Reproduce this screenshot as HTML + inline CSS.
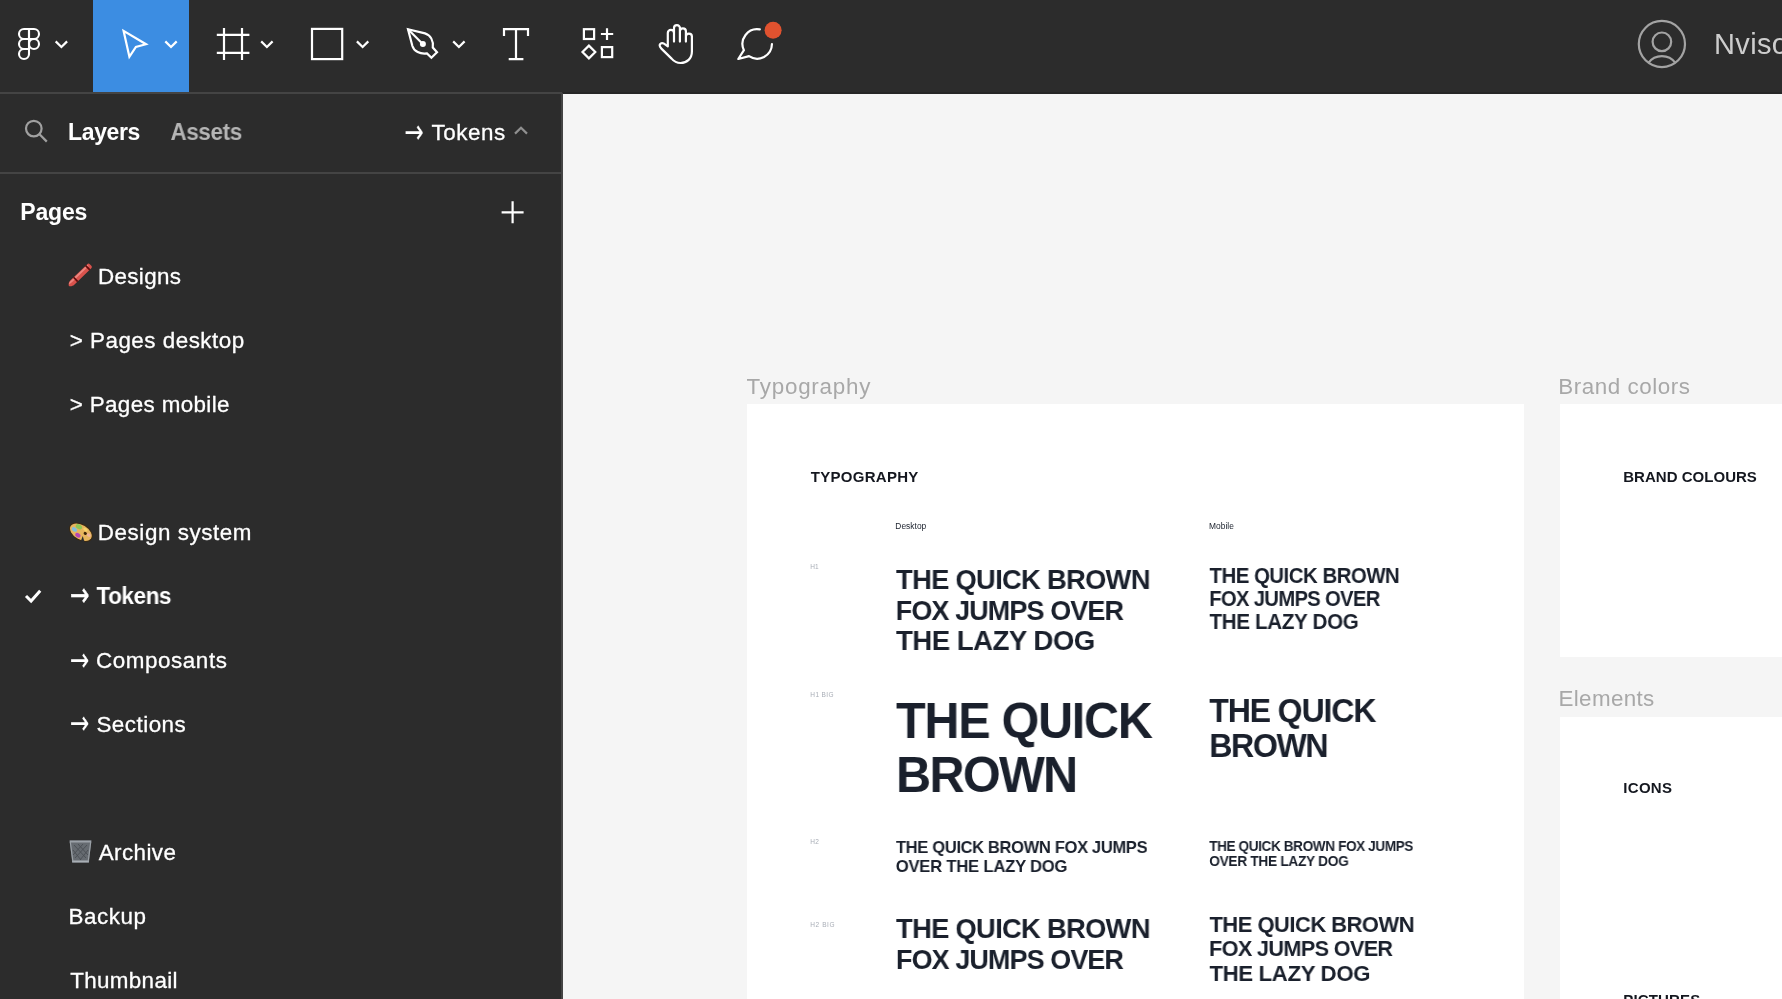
<!DOCTYPE html>
<html lang="en">
<head>
<meta charset="utf-8">
<title>Nviso – Figma</title>
<style>
html,body{margin:0;padding:0;}
body{width:1782px;height:999px;overflow:hidden;position:relative;background:#f5f5f5;font-family:"Liberation Sans",sans-serif;}
.abs{position:absolute;}
.t{position:absolute;white-space:nowrap;margin:0;padding:0;will-change:transform;}
#canvas{left:563px;top:94px;width:1219px;height:905px;background:#f5f5f5;overflow:hidden;}
#toolbar{left:0;top:0;width:1782px;height:93px;background:#2c2c2c;}
#tbline{left:563px;top:92px;width:1219px;height:2px;background:#262626;}
#panel{left:0;top:92px;width:562px;height:907px;background:#2c2c2c;}
#pline-top{left:0;top:92px;width:562px;height:2px;background:#444444;}
#pline-right{left:561px;top:93px;width:2px;height:906px;background:#444444;}
#pline-hdr{left:0;top:172px;width:561px;height:2px;background:#444444;}
#sel{left:93px;top:0;width:96px;height:92px;background:#3c8de2;}
.frame{position:absolute;background:#ffffff;}
.grp{position:absolute;left:0;top:0;width:0;height:0;margin:0;padding:0;list-style:none;}
svg{position:absolute;overflow:visible;}
#layers{left:68px;top:118px;font-size:23px;line-height:28px;font-weight:700;letter-spacing:-0.390px;color:#ffffff;padding-left:0.10px;}
#assets{left:170px;top:118px;font-size:23px;line-height:28px;font-weight:700;letter-spacing:-0.365px;color:#b5b5b5;transform:scale(0.9754,1);transform-origin:0 50%;padding-left:0.42px;}
#tok_hdr{left:431px;top:119px;font-size:22.4px;line-height:27px;font-weight:400;letter-spacing:0.560px;color:#ffffff;-webkit-text-stroke:0.3px #fff;padding-left:0.45px;}
#pages{left:20px;top:198px;font-size:23px;line-height:28px;font-weight:700;letter-spacing:-0.162px;color:#ffffff;padding-left:0.30px;}
#p_designs{left:97px;top:263px;font-size:22.4px;line-height:27px;font-weight:400;letter-spacing:0.350px;color:#ffffff;-webkit-text-stroke:0.3px #fff;padding-left:0.95px;}
#p_pdesk{left:69px;top:327px;font-size:22.4px;line-height:27px;font-weight:400;letter-spacing:0.504px;color:#ffffff;-webkit-text-stroke:0.3px #fff;padding-left:0.70px;}
#p_pmob{left:69px;top:391px;font-size:22.4px;line-height:27px;font-weight:400;letter-spacing:0.369px;color:#ffffff;-webkit-text-stroke:0.3px #fff;padding-left:0.70px;}
#p_ds{left:97px;top:519px;font-size:22.4px;line-height:27px;font-weight:400;letter-spacing:0.571px;color:#ffffff;-webkit-text-stroke:0.3px #fff;padding-left:0.85px;}
#p_tok{left:96px;top:582px;font-size:23px;line-height:28px;font-weight:700;letter-spacing:-0.374px;color:#ffffff;transform:scale(0.9758,1);transform-origin:0 50%;padding-left:0.47px;}
#p_comp{left:95px;top:647px;font-size:22.4px;line-height:27px;font-weight:400;letter-spacing:0.589px;color:#ffffff;-webkit-text-stroke:0.3px #fff;padding-left:0.90px;}
#p_sect{left:96px;top:711px;font-size:22.4px;line-height:27px;font-weight:400;letter-spacing:0.493px;color:#ffffff;-webkit-text-stroke:0.3px #fff;padding-left:0.40px;}
#p_arch{left:98px;top:839px;font-size:22.4px;line-height:27px;font-weight:400;letter-spacing:0.425px;color:#ffffff;-webkit-text-stroke:0.3px #fff;padding-left:0.70px;}
#p_back{left:68px;top:903px;font-size:22.4px;line-height:27px;font-weight:400;letter-spacing:0.550px;color:#ffffff;-webkit-text-stroke:0.3px #fff;padding-left:0.45px;}
#p_thumb{left:70px;top:967px;font-size:22.4px;line-height:27px;font-weight:400;letter-spacing:0.350px;color:#ffffff;-webkit-text-stroke:0.3px #fff;padding-left:0.15px;}
#fname{left:1714px;top:27px;font-size:29px;line-height:35px;font-weight:400;letter-spacing:0.300px;color:#cdcdcd;padding-left:0.10px;}
#l_typo{left:746px;top:373px;font-size:22.4px;line-height:27px;font-weight:400;letter-spacing:0.756px;color:#a8a8a8;padding-left:0.60px;}
#l_brand{left:1558px;top:373px;font-size:22.4px;line-height:27px;font-weight:400;letter-spacing:0.536px;color:#a8a8a8;padding-left:0.35px;}
#l_elem{left:1558px;top:685px;font-size:22.4px;line-height:27px;font-weight:400;letter-spacing:0.364px;color:#a8a8a8;padding-left:0.45px;}
#h_typo{left:810px;top:468px;font-size:15px;line-height:18px;font-weight:700;letter-spacing:0.289px;color:#14171f;padding-left:0.75px;}
#h_brand{left:1623px;top:468px;font-size:15px;line-height:18px;font-weight:700;letter-spacing:0.029px;color:#14171f;padding-left:0.20px;}
#h_icons{left:1623px;top:779px;font-size:15px;line-height:18px;font-weight:700;letter-spacing:0.300px;color:#14171f;padding-left:0.30px;}
#h_pict{left:1623px;top:991px;font-size:15px;line-height:18px;font-weight:700;letter-spacing:0.150px;color:#14171f;padding-left:0.30px;}
#s_desk{left:895px;top:521px;font-size:8.4px;line-height:11px;font-weight:400;letter-spacing:0.025px;color:#1a202c;padding-left:0.35px;}
#s_mob{left:1208px;top:521px;font-size:8.4px;line-height:11px;font-weight:400;letter-spacing:0.060px;color:#1a202c;padding-left:0.95px;}
#t_h1{left:810px;top:563px;font-size:6.5px;line-height:8px;font-weight:400;letter-spacing:0.100px;color:#a8adb6;padding-left:0.30px;}
#t_h1b{left:810px;top:691px;font-size:6.5px;line-height:8px;font-weight:400;letter-spacing:0.390px;color:#a8adb6;padding-left:0.30px;}
#t_h2{left:810px;top:838px;font-size:6.5px;line-height:8px;font-weight:400;letter-spacing:0.250px;color:#a8adb6;padding-left:0.30px;}
#t_h2b{left:810px;top:921px;font-size:6.5px;line-height:8px;font-weight:400;letter-spacing:0.590px;color:#a8adb6;padding-left:0.30px;}
#h1d_1{left:896px;top:562px;font-size:28.35px;line-height:35px;font-weight:700;letter-spacing:-0.707px;color:#1a202c;transform:scale(0.9635,1);transform-origin:0 50%;padding-left:0.06px;}
#h1d_2{left:895px;top:593px;font-size:28.35px;line-height:35px;font-weight:700;letter-spacing:-0.937px;color:#1a202c;transform:scale(0.9512,1);transform-origin:0 50%;padding-left:0.84px;}
#h1d_3{left:896px;top:623px;font-size:28.35px;line-height:35px;font-weight:700;letter-spacing:-0.517px;color:#1a202c;transform:scale(0.9728,1);transform-origin:0 50%;padding-left:0.06px;}
#h1m_1{left:1209px;top:563px;font-size:21.2px;line-height:26px;font-weight:700;letter-spacing:-0.526px;color:#1a202c;transform:scale(0.9638,1);transform-origin:0 50%;padding-left:0.48px;}
#h1m_2{left:1209px;top:586px;font-size:21.2px;line-height:26px;font-weight:700;letter-spacing:-0.671px;color:#1a202c;transform:scale(0.9531,1);transform-origin:0 50%;padding-left:0.18px;}
#h1m_3{left:1209px;top:609px;font-size:21.2px;line-height:26px;font-weight:700;letter-spacing:-0.365px;color:#1a202c;transform:scale(0.9741,1);transform-origin:0 50%;padding-left:0.47px;}
#h1bd_1{left:896px;top:690px;font-size:50.5px;line-height:61px;font-weight:700;letter-spacing:-1.329px;color:#1a202c;transform:scale(0.9616,1);transform-origin:0 50%;padding-left:0.02px;}
#h1bd_2{left:896px;top:744px;font-size:50.5px;line-height:61px;font-weight:700;letter-spacing:-1.769px;color:#1a202c;transform:scale(0.9626,1);transform-origin:0 50%;padding-left:0.03px;}
#h1bm_1{left:1209px;top:690px;font-size:33.7px;line-height:41px;font-weight:700;letter-spacing:-1.150px;color:#1a202c;transform:scale(0.95,1);transform-origin:0 50%;padding-left:0.24px;}
#h1bm_2{left:1209px;top:725px;font-size:33.7px;line-height:41px;font-weight:700;letter-spacing:-1.459px;color:#1a202c;transform:scale(0.9539,1);transform-origin:0 50%;padding-left:0.16px;}
#h2d_1{left:895px;top:837px;font-size:17.1px;line-height:21px;font-weight:700;letter-spacing:-0.363px;color:#1a202c;transform:scale(0.9674,1);transform-origin:0 50%;padding-left:0.99px;}
#h2d_2{left:895px;top:856px;font-size:17.1px;line-height:21px;font-weight:700;letter-spacing:-0.261px;color:#1a202c;transform:scale(0.9766,1);transform-origin:0 50%;padding-left:0.68px;}
#h2m_1{left:1209px;top:838px;font-size:14.15px;line-height:17px;font-weight:700;letter-spacing:-0.383px;color:#1a202c;transform:scale(0.9585,1);transform-origin:0 50%;padding-left:0.17px;}
#h2m_2{left:1209px;top:853px;font-size:14.15px;line-height:17px;font-weight:700;letter-spacing:-0.300px;color:#1a202c;transform:scale(0.9675,1);transform-origin:0 50%;padding-left:0.22px;}
#h2bd_1{left:896px;top:911px;font-size:28.35px;line-height:35px;font-weight:700;letter-spacing:-0.707px;color:#1a202c;transform:scale(0.9635,1);transform-origin:0 50%;padding-left:0.06px;}
#h2bd_2{left:895px;top:942px;font-size:28.35px;line-height:35px;font-weight:700;letter-spacing:-0.944px;color:#1a202c;transform:scale(0.9507,1);transform-origin:0 50%;padding-left:1.05px;}
#h2bm_1{left:1209px;top:910px;font-size:22.75px;line-height:28px;font-weight:700;letter-spacing:-0.536px;color:#1a202c;transform:scale(0.9656,1);transform-origin:0 50%;padding-left:0.47px;}
#h2bm_2{left:1209px;top:934px;font-size:22.75px;line-height:28px;font-weight:700;letter-spacing:-0.715px;color:#1a202c;transform:scale(0.9536,1);transform-origin:0 50%;padding-left:0.07px;}
#h2bm_3{left:1209px;top:959px;font-size:22.75px;line-height:28px;font-weight:700;letter-spacing:-0.365px;color:#1a202c;transform:scale(0.9759,1);transform-origin:0 50%;padding-left:0.47px;}
#a_hdr{left:404px;top:112px;font-size:33px;line-height:40px;font-weight:400;letter-spacing:0.000px;color:#ffffff;transform:scale(0.7,1);transform-origin:0 50%;font-family:'DejaVu Sans','Liberation Sans',sans-serif;padding-left:0.57px;}
#a_tok{left:69px;top:575px;font-size:33px;line-height:40px;font-weight:400;letter-spacing:0.000px;color:#ffffff;-webkit-text-stroke:0.5px #fff;transform:scale(0.7,1);transform-origin:0 50%;font-family:'DejaVu Sans','Liberation Sans',sans-serif;padding-left:1.39px;}
#a_comp{left:69px;top:640px;font-size:33px;line-height:40px;font-weight:400;letter-spacing:0.000px;color:#ffffff;transform:scale(0.7,1);transform-origin:0 50%;font-family:'DejaVu Sans','Liberation Sans',sans-serif;padding-left:1.14px;}
#a_sect{left:69px;top:703px;font-size:33px;line-height:40px;font-weight:400;letter-spacing:0.000px;color:#ffffff;transform:scale(0.7,1);transform-origin:0 50%;font-family:'DejaVu Sans','Liberation Sans',sans-serif;padding-left:1.14px;}
</style>
</head>
<body>
<div id="canvas" class="abs"></div>
<div class="frame" style="left:746.5px;top:403.7px;width:777.5px;height:600px"></div>
<div class="frame" style="left:1559.5px;top:403.7px;width:230px;height:253.4px"></div>
<div class="frame" style="left:1559.5px;top:716.5px;width:230px;height:290px"></div>
<div id="toolbar" class="abs"></div>
<div id="tbline" class="abs"></div>
<div id="panel" class="abs"></div>
<div id="pline-top" class="abs"></div>
<div id="pline-right" class="abs"></div>
<div id="pline-hdr" class="abs"></div>
<div id="sel" class="abs"></div>
<svg id="icons" width="1782" height="999" viewBox="0 0 1782 999" style="left:0;top:0" fill="none" stroke="#ffffff" stroke-width="2.2">
<!-- figma logo -->
<g stroke-width="2.1">
<path d="M29,29 H24 a5,5 0 0 0 0,10 H29 Z"/>
<path d="M29,29 H34 a5,5 0 0 1 0,10 H29 Z"/>
<path d="M29,39 H24 a5,5 0 0 0 0,10 H29 Z"/>
<circle cx="34" cy="44" r="5"/>
<path d="M29,49 H24 a5,5 0 1 0 5,5 Z"/>
</g>
<!-- chevrons -->
<g stroke-width="2.2">
<path d="M55.7,41.4 L61.4,47 L67.1,41.4"/>
<path d="M165.3,41.4 L171,47 L176.7,41.4"/>
<path d="M261.2,41.4 L266.9,47 L272.6,41.4"/>
<path d="M356.9,41.4 L362.6,47 L368.3,41.4"/>
<path d="M453.2,41.4 L458.9,47 L464.6,41.4"/>
</g>
<!-- move tool -->
<path d="M123.6,30.9 L146,44.2 L135.9,46.9 L129.4,56.8 Z" stroke-linejoin="miter"/>
<!-- frame tool -->
<path d="M224,27.9 V60.1 M242,27.9 V60.1 M216.8,34.9 H249.4 M216.8,52.9 H249.4"/>
<!-- rectangle tool -->
<rect x="312" y="28.9" width="30.2" height="30.2"/>
<!-- pen tool -->
<path d="M408,29.2 L425,33.4 C430.5,35.2 433.6,40.5 432.8,47.6 L437,52.3 L431.4,57.8 L427,53.4 C420,54.3 414,51.5 412.4,46 Z" stroke-linejoin="miter"/>
<path d="M408,29.3 L422,43.2"/>
<circle cx="422.9" cy="44.1" r="3" fill="#ffffff" stroke="none"/>
<!-- text tool -->
<path d="M504,35.9 V29.1 H528 V35.9 M516,29.1 V59.2 M508.7,59.2 H523.4"/>
<!-- components -->
<rect x="583.9" y="29.2" width="10.2" height="9.8"/>
<path d="M607,28.2 V40 M600.9,34 H613.2"/>
<path d="M588.9,45.6 L595.3,52 L588.9,58.4 L582.5,52 Z"/>
<rect x="601.9" y="47.1" width="10.3" height="10"/>
<!-- hand -->
<path stroke-linejoin="round" stroke-linecap="round" d="M667.8,46.4 V33 a3.1,3.1 0 0 1 6.2,0 V41.6 M674,33 V28.1 a2.95,2.95 0 0 1 5.9,0 V41.6 M679.9,31.3 a3,3 0 0 1 6,0 V41.6 M685.9,36.6 a3,3 0 0 1 6,0 V51.5 C691.9,58.5 687,63 680.5,63 C676.5,63 673.8,61.2 671.6,58.6 L661.4,48.6 C659.3,46.6 659.2,44.6 660.6,43.6 C661.6,42.8 662.8,42.9 664,43.7 L667.8,46.4"/>
<!-- comment -->
<path stroke-linecap="round" stroke-linejoin="round" d="M759.8,29.4 A14.75,14.75 0 0 0 743.9,50.2 L738.3,59 L749,56.15 A14.75,14.75 0 0 0 771.95,44.1"/>
<circle cx="773.1" cy="30.2" r="8.5" fill="#e0522f" stroke="none"/>
<!-- user -->
<g stroke="#a3a3a3">
<circle cx="1661.9" cy="44" r="23.1"/>
<circle cx="1661.9" cy="41.8" r="9.3"/>
<path d="M1648.4,62.9 C1652,58 1657,56.1 1661.9,56.1 C1666.8,56.1 1671.8,58 1675.4,62.9"/>
</g>
<!-- search -->
<g stroke="#a0a0a0">
<circle cx="33.8" cy="128.6" r="7.8"/>
<path d="M39.5,134.3 L46.8,141.6"/>
</g>
<!-- page dropdown caret -->
<path d="M515,133.6 L521,127.8 L527,133.6" stroke="#909090"/>
<!-- plus -->
<path d="M512.6,201.3 V223.3 M501.6,212.3 H523.6"/>
<!-- check -->
<path d="M26,596 L31.1,601 L40.2,590.8" stroke-width="3"/>
<!-- crayon -->
<g transform="translate(79.8,275.4) rotate(-44)" stroke="none">
<title>🖍️</title>
<path d="M-15.2,0 C-14.5,-1.6 -12.5,-2.9 -10.5,-2.9 H13.2 a1.8,1.8 0 0 1 1.8,1.8 V1.1 a1.8,1.8 0 0 1 -1.8,1.8 H-10.5 C-12.5,2.9 -14.5,1.6 -15.2,0 Z" fill="#d9524c"/>
<path d="M-14,-0.9 C-13,-2 -12,-2.4 -10.5,-2.4 H13 V-0.6 H-10 Z" fill="#f0908a" opacity="0.85"/>
<rect x="-6.6" y="-3" width="1.7" height="6" fill="#5e0b0b"/>
<rect x="10.2" y="-3" width="1.7" height="6" fill="#5e0b0b"/>
</g>
<!-- palette -->
<g transform="translate(80.9,532.2) rotate(31)" stroke="none">
<title>🎨</title>
<ellipse cx="0" cy="0" rx="13" ry="8.3" fill="#3a2a14"/>
<ellipse cx="0" cy="0" rx="11.9" ry="7.2" fill="#e7b55e"/>
<ellipse cx="-4.5" cy="-3.6" rx="3.4" ry="2.3" fill="#8ec655"/>
<ellipse cx="-7" cy="1" rx="2.9" ry="2" fill="#82bfdc"/>
<ellipse cx="-1" cy="4.2" rx="2.9" ry="2.1" fill="#b645b4"/>
<ellipse cx="4.4" cy="-1.2" rx="1.7" ry="1.5" fill="#3a2208"/>
<ellipse cx="8.3" cy="-1.6" rx="2.2" ry="1.7" fill="#f0b49a"/>
<ellipse cx="2.6" cy="-4.6" rx="2.4" ry="1.5" fill="#f6d26a"/>
<path d="M3.5,2.2 L8.5,7 L4.5,8 Z" fill="#2c2c2c"/>
</g>
<!-- wastebasket -->
<g stroke="none">
<title>🗑️</title>
<path d="M69.6,840.4 H91.4 L88.9,862.4 H72.2 Z" fill="#666b71"/>
<path d="M69.6,840.4 H91.4 L91.1,842.6 H69.9 Z" fill="#9ba1a8"/>
<path d="M72,860.4 H89.1 L88.9,862.4 H72.2 Z" fill="#a9afb5"/>
<path d="M70.3,842 L72.9,861.5 M90.7,842 L88.2,861.5" stroke="#9aa0a6" stroke-width="1.2" fill="none"/>
<path d="M74,845 L86,858 M78,844 L88,855 M73,850 L81,860 M87,845 L75,858 M83,844 L73,855 M88,850 L80,860" stroke="#4a4e53" stroke-width="0.9" fill="none"/>
</g>
</svg>

<header class="grp" id="g-toolbar">
<div class="t" id="fname">Nviso</div>
</header>
<nav class="grp" id="g-panel-header">
<div class="t" id="layers">Layers</div>
<div class="t" id="assets">Assets</div>
<div class="t" id="tok_hdr">Tokens</div>
<div class="t" id="pages">Pages</div>
<div class="t" id="a_hdr">→</div>
</nav>
<nav class="grp" id="g-pages">
<div class="t" id="p_designs">Designs</div>
<div class="t" id="p_pdesk">&gt; Pages desktop</div>
<div class="t" id="p_pmob">&gt; Pages mobile</div>
<div class="t" id="p_ds">Design system</div>
<div class="t" id="p_tok">Tokens</div>
<div class="t" id="p_comp">Composants</div>
<div class="t" id="p_sect">Sections</div>
<div class="t" id="p_arch">Archive</div>
<div class="t" id="p_back">Backup</div>
<div class="t" id="p_thumb">Thumbnail</div>
<div class="t" id="a_tok">→</div>
<div class="t" id="a_comp">→</div>
<div class="t" id="a_sect">→</div>
</nav>
<main class="grp" id="g-canvas">
<div class="t" id="l_typo">Typography</div>
<div class="t" id="l_brand">Brand colors</div>
<div class="t" id="l_elem">Elements</div>
<div class="t" id="h_typo">TYPOGRAPHY</div>
<div class="t" id="h_brand">BRAND COLOURS</div>
<div class="t" id="h_icons">ICONS</div>
<div class="t" id="h_pict">PICTURES</div>
<div class="t" id="s_desk">Desktop</div>
<div class="t" id="s_mob">Mobile</div>
<div class="t" id="t_h1">H1</div>
<div class="t" id="t_h1b">H1 BIG</div>
<div class="t" id="t_h2">H2</div>
<div class="t" id="t_h2b">H2 BIG</div>
<div class="t" id="h1d_1">THE QUICK BROWN</div>
<div class="t" id="h1d_2">FOX JUMPS OVER</div>
<div class="t" id="h1d_3">THE LAZY DOG</div>
<div class="t" id="h1m_1">THE QUICK BROWN</div>
<div class="t" id="h1m_2">FOX JUMPS OVER</div>
<div class="t" id="h1m_3">THE LAZY DOG</div>
<div class="t" id="h1bd_1">THE QUICK</div>
<div class="t" id="h1bd_2">BROWN</div>
<div class="t" id="h1bm_1">THE QUICK</div>
<div class="t" id="h1bm_2">BROWN</div>
<div class="t" id="h2d_1">THE QUICK BROWN FOX JUMPS</div>
<div class="t" id="h2d_2">OVER THE LAZY DOG</div>
<div class="t" id="h2m_1">THE QUICK BROWN FOX JUMPS</div>
<div class="t" id="h2m_2">OVER THE LAZY DOG</div>
<div class="t" id="h2bd_1">THE QUICK BROWN</div>
<div class="t" id="h2bd_2">FOX JUMPS OVER</div>
<div class="t" id="h2bm_1">THE QUICK BROWN</div>
<div class="t" id="h2bm_2">FOX JUMPS OVER</div>
<div class="t" id="h2bm_3">THE LAZY DOG</div>
</main>
</body>
</html>
